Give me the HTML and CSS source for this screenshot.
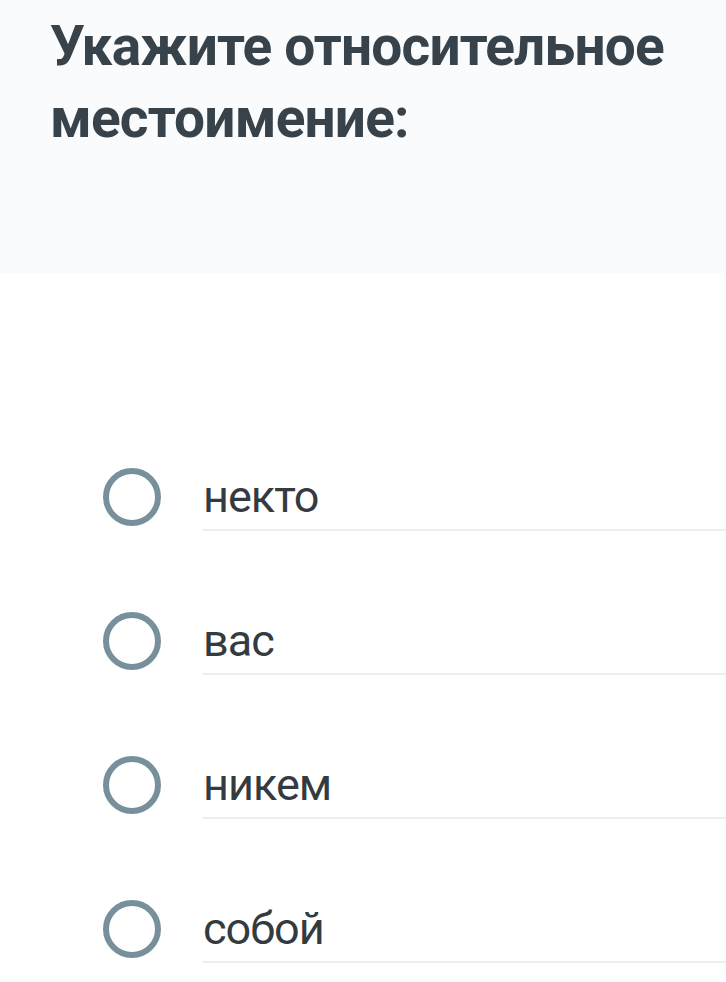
FILE: index.html
```html
<!DOCTYPE html>
<html lang="ru">
<head>
<meta charset="utf-8">
<link rel="stylesheet" href="styles.css">
</head>
<body>
<header class="question">
  <h1 class="question-title">Укажите относительное местоимение:</h1>
</header>
<ul class="options">
  <li class="option"><span class="radio"></span><span class="label">некто</span></li>
  <li class="option"><span class="radio"></span><span class="label">вас</span></li>
  <li class="option"><span class="radio"></span><span class="label">никем</span></li>
  <li class="option"><span class="radio"></span><span class="label">собой</span></li>
</ul>
</body>
</html>
```
FILE: styles.css
```css
html, body {
  margin: 0;
  padding: 0;
  background: #ffffff;
  overflow: hidden;
}
body {
  font-family: Roboto, "Noto Sans", sans-serif;
  width: 726px;
  height: 982px;
}
.question {
  background: #f9fbfc;
  padding: 10px 20px 119px 50px;
}
.question-title {
  margin: 0;
  font-size: 55px;
  line-height: 72px;
  letter-spacing: -0.8px;
  font-weight: 700;
  color: #37424a;
}
.options {
  list-style: none;
  margin: 152px 0 0;
  padding: 0 0 0 103px;
}
.option {
  display: flex;
  align-items: center;
  height: 144px;
  gap: 42px;
}
.radio {
  flex: none;
  width: 58px;
  height: 58px;
  box-sizing: border-box;
  border: 6px solid #78909c;
  border-radius: 50%;
}
.label {
  flex: 1;
  box-sizing: border-box;
  height: 68px;
  padding-top: 6px;
  font-size: 45px;
  line-height: 56px;
  letter-spacing: -1px;
  color: #333b40;
  border-bottom: 2px solid #eceff1;
}
```
